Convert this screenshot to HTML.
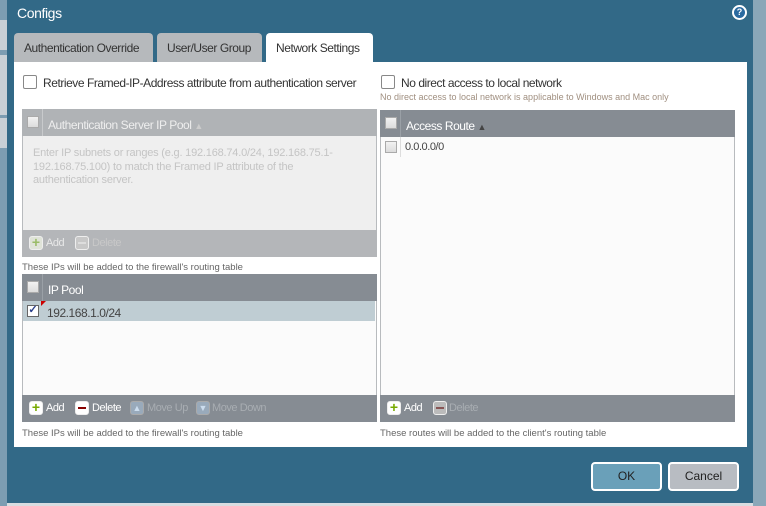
<!DOCTYPE html>
<html><head><style>
*{margin:0;padding:0;box-sizing:border-box}
body{width:766px;height:506px;overflow:hidden;background:#d8dde1;font-family:"Liberation Sans",Tahoma,sans-serif;position:relative}
.a{position:absolute}
.t{font-size:12px;letter-spacing:-0.45px;color:#333;white-space:nowrap}
.s{font-size:9.5px;color:#666;white-space:nowrap}
.cb{position:absolute;width:13px;height:13px;border:1px solid #888;background:#fff;border-radius:2px}
.cbs{position:absolute;width:12px;height:12px;border:1px solid #aaa;background:linear-gradient(#f2f2f2,#dcdcdc)}
.ic{position:absolute;width:14px;height:14px;border-radius:3px;border:1px solid #eee;}
</style></head><body>
<div class="a" style="left:0;top:0;width:7px;height:506px;background:#7c9db2"></div>
<div class="a" style="left:0;top:20px;width:7px;height:30px;background:#c8d0d6"></div>
<div class="a" style="left:0;top:55px;width:7px;height:30px;background:#c8d0d6"></div>
<div class="a" style="left:0;top:85px;width:7px;height:30px;background:#c8d0d6"></div>
<div class="a" style="left:0;top:118px;width:7px;height:30px;background:#c8d0d6"></div>
<div class="a" style="left:753px;top:0;width:13px;height:506px;background:#8aa7b8"></div>
<div class="a" style="left:7px;top:0;width:746px;height:503px;background:#326987"></div>
<div class="a" style="left:17px;top:5px;font-size:14px;letter-spacing:-0.4px;color:#fff">Configs</div>
<div class="a" style="left:732px;top:5px;width:15px;height:15px;border-radius:50%;background:#fff;"><div style="margin:2px;width:11px;height:11px;border-radius:50%;background:#2a6aa0;color:#fff;font-size:9px;font-weight:bold;text-align:center;line-height:11px">?</div></div>
<div class="a" style="left:14px;top:33px;width:139px;height:29px;background:#b6b9bc;border-radius:4px 4px 0 0"></div>
<div class="a t" style="left:24px;top:41px">Authentication Override</div>
<div class="a" style="left:157px;top:33px;width:105px;height:29px;background:#b6b9bc;border-radius:4px 4px 0 0"></div>
<div class="a t" style="left:167px;top:41px">User/User Group</div>
<div class="a" style="left:266px;top:33px;width:107px;height:30px;background:#fff;border-radius:4px 4px 0 0"></div>
<div class="a t" style="left:276px;top:41px">Network Settings</div>
<div class="a" style="left:14px;top:62px;width:733px;height:385px;background:#fff"></div>
<div class="cb" style="left:23px;top:75px;width:14px;height:14px"></div>
<div class="a t" style="left:43px;top:76px">Retrieve Framed-IP-Address attribute from authentication server</div>
<div class="cb" style="left:381px;top:75px;width:14px;height:14px"></div>
<div class="a t" style="left:401px;top:76px">No direct access to local network</div>
<div class="a s" style="left:380px;top:92px;color:#a08f80;font-size:9px">No direct access to local network is applicable to Windows and Mac only</div>
<!-- grid1 -->
<div class="a" style="left:22px;top:109px;width:355px;height:148px;background:#efefef;border:1px solid #b8bbbe"></div>
<div class="a" style="left:22px;top:109px;width:355px;height:27px;background:#b0b3b6"></div>
<div class="cbs" style="left:27px;top:116px"></div>
<div class="a" style="left:42px;top:109px;width:1px;height:27px;background:#c8cacc"></div>
<div class="a t" style="left:48px;top:118px;color:#eee">Authentication Server IP Pool <span style="font-size:9px;color:#ccc">▲</span></div>
<div class="a" style="left:33px;top:147px;font-size:11px;letter-spacing:-0.2px;color:#c4c4c4;line-height:13.5px;width:318px">Enter IP subnets or ranges (e.g. 192.168.74.0/24, 192.168.75.1-192.168.75.100) to match the Framed IP attribute of the authentication server.</div>
<div class="a" style="left:22px;top:230px;width:355px;height:27px;background:#b4b6b9"></div>
<div class="ic" style="left:29px;top:236px;background:#dfe3d8;color:#9b6;font-weight:bold;font-size:14px;line-height:11px;text-align:center">+</div>
<div class="a t" style="left:46px;top:237px;color:#e8e8e8;font-size:11px">Add</div>
<div class="ic" style="left:75px;top:236px;background:#c8c8c8;"><div style="margin:5px 2px;height:2px;background:#ddd"></div></div>
<div class="a t" style="left:92px;top:237px;color:#c8c8c8;font-size:11px">Delete</div>
<div class="a s" style="left:22px;top:262px">These IPs will be added to the firewall's routing table</div>
<!-- grid2 -->
<div class="a" style="left:22px;top:274px;width:355px;height:148px;background:#fbfbfb;border:1px solid #b8bbbe"></div>
<div class="a" style="left:22px;top:274px;width:355px;height:27px;background:#868c93"></div>
<div class="cbs" style="left:27px;top:281px"></div>
<div class="a" style="left:42px;top:274px;width:1px;height:27px;background:#9aa0a6"></div>
<div class="a t" style="left:48px;top:283px;color:#fff">IP Pool</div>
<div class="a" style="left:23px;top:301px;width:352px;height:20px;background:#bfcdd3"></div>
<div class="cbs" style="left:27px;top:305px;background:#fff;border-color:#666;color:#2a3f8a;font-size:11px;line-height:9px;font-weight:bold;text-align:center">✓</div>
<div class="a" style="left:41px;top:301px;width:0;height:0;border-top:5px solid #c00;border-right:5px solid transparent"></div>
<div class="a t" style="left:47px;top:306px;color:#444">192.168.1.0/24</div>
<div class="a" style="left:22px;top:395px;width:355px;height:27px;background:#868c93"></div>
<div class="ic" style="left:29px;top:401px;background:#fff;color:#7a0;font-weight:bold;font-size:14px;line-height:11px;text-align:center">+</div>
<div class="a t" style="left:46px;top:402px;color:#fff;font-size:11px">Add</div>
<div class="ic" style="left:75px;top:401px;background:#fff;"><div style="margin:5px 2px;height:2px;background:#800"></div></div>
<div class="a t" style="left:92px;top:402px;color:#fff;font-size:11px">Delete</div>
<div class="ic" style="left:130px;top:401px;background:#9ab;border-color:#aaa;color:#cde;font-size:9px;line-height:12px;text-align:center">▲</div>
<div class="a t" style="left:147px;top:402px;color:#a8adb2;font-size:11px">Move Up</div>
<div class="ic" style="left:196px;top:401px;background:#9ab;border-color:#aaa;color:#cde;font-size:9px;line-height:12px;text-align:center">▼</div>
<div class="a t" style="left:212px;top:402px;color:#a8adb2;font-size:11px">Move Down</div>
<div class="a s" style="left:22px;top:428px">These IPs will be added to the firewall's routing table</div>
<!-- grid3 -->
<div class="a" style="left:380px;top:110px;width:355px;height:312px;background:#fbfbfb;border:1px solid #b8bbbe"></div>
<div class="a" style="left:380px;top:110px;width:355px;height:27px;background:#868c93"></div>
<div class="cbs" style="left:385px;top:117px"></div>
<div class="a" style="left:400px;top:110px;width:1px;height:27px;background:#9aa0a6"></div>
<div class="a t" style="left:406px;top:119px;color:#fff">Access Route <span style="font-size:9px;color:#444">▲</span></div>
<div class="cbs" style="left:385px;top:141px"></div>
<div class="a" style="left:400px;top:137px;width:1px;height:20px;background:#ddd"></div>
<div class="a t" style="left:405px;top:141px;color:#444;font-size:11px">0.0.0.0/0</div>
<div class="a" style="left:380px;top:395px;width:355px;height:27px;background:#868c93"></div>
<div class="ic" style="left:387px;top:401px;background:#fff;color:#7a0;font-weight:bold;font-size:14px;line-height:11px;text-align:center">+</div>
<div class="a t" style="left:404px;top:402px;color:#fff;font-size:11px">Add</div>
<div class="ic" style="left:433px;top:401px;background:#bbb;"><div style="margin:5px 2px;height:2px;background:#855"></div></div>
<div class="a t" style="left:449px;top:402px;color:#a8adb2;font-size:11px">Delete</div>
<div class="a s" style="left:380px;top:428px">These routes will be added to the client's routing table</div>
<!-- buttons -->
<div class="a" style="left:591px;top:462px;width:71px;height:29px;background:#6aa0b9;border:2px solid #fff;border-radius:4px;font-size:12px;text-align:center;line-height:25px;color:#222">OK</div>
<div class="a" style="left:668px;top:462px;width:71px;height:29px;background:#b8bcc2;border:2px solid #fff;border-radius:4px;font-size:12px;text-align:center;line-height:25px;color:#222">Cancel</div>
</body></html>
